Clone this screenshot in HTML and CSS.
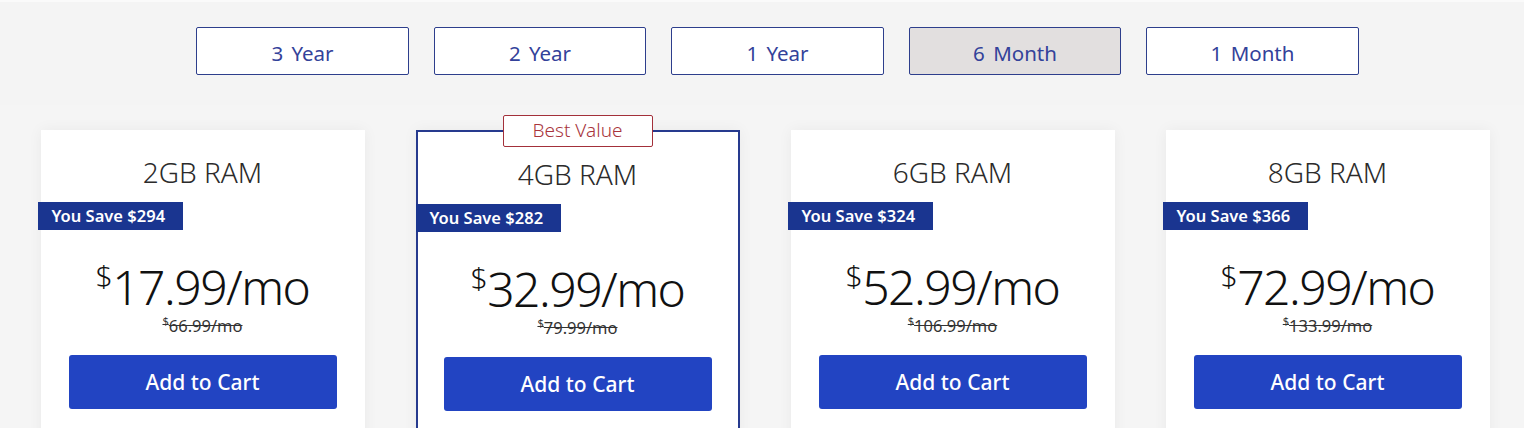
FILE: index.html
```html
<!DOCTYPE html>
<html lang="en">
<head>
<meta charset="utf-8">
<title>Pricing</title>
<link rel="stylesheet" href="styles.css">
</head>
<body>
<section class="terms">
  <div class="tabs">
    <button class="tab">3 Year</button>
    <button class="tab">2 Year</button>
    <button class="tab">1 Year</button>
    <button class="tab active">6 Month</button>
    <button class="tab">1 Month</button>
  </div>
</section>
<section class="plans">
  <div class="card">
    <h2 class="title">2GB RAM</h2>
    <div class="save">You Save $294</div>
    <div class="price"><sup class="cur">$</sup>17.99/mo</div>
    <div class="old"><sup>$</sup>66.99/mo</div>
    <button class="cart">Add to Cart</button>
  </div>
  <div class="card featured">
    <div class="ribbon">Best Value</div>
    <h2 class="title">4GB RAM</h2>
    <div class="save">You Save $282</div>
    <div class="price"><sup class="cur">$</sup>32.99/mo</div>
    <div class="old"><sup>$</sup>79.99/mo</div>
    <button class="cart">Add to Cart</button>
  </div>
  <div class="card">
    <h2 class="title">6GB RAM</h2>
    <div class="save">You Save $324</div>
    <div class="price"><sup class="cur">$</sup>52.99/mo</div>
    <div class="old"><sup>$</sup>106.99/mo</div>
    <button class="cart">Add to Cart</button>
  </div>
  <div class="card">
    <h2 class="title">8GB RAM</h2>
    <div class="save">You Save $366</div>
    <div class="price"><sup class="cur">$</sup>72.99/mo</div>
    <div class="old"><sup>$</sup>133.99/mo</div>
    <button class="cart">Add to Cart</button>
  </div>
</section>
</body>
</html>
```
FILE: styles.css
```css
html, body {
  margin: 0;
  padding: 0;
  background: #f5f5f5;
  font-family: "Noto Sans", "Open Sans", sans-serif;
  overflow: hidden;
}
.terms {
  background: #f4f4f4;
  height: 105px;
  border-top: 2px solid #fafafa;
  box-sizing: border-box;
}
.tabs {
  display: flex;
  justify-content: center;
  gap: 25px;
  padding-top: 25px;
  padding-left: 31px;
}
.tab {
  width: 212.5px;
  height: 48px;
  background: #fff;
  border: 1px solid #2d3e8c;
  border-radius: 2px;
  color: #33429a;
  font-family: "Noto Sans", sans-serif;
  font-size: 20.5px;
  font-weight: 400;
  word-spacing: 3px;
  padding: 3px 0 0;
}
.tab.active {
  background: #e2dfdf;
}
.plans {
  display: flex;
  justify-content: center;
  gap: 51px;
  padding-top: 25px;
  padding-left: 6px;
}
.card {
  position: relative;
  width: 324px;
  height: 320px;
  box-sizing: border-box;
  background: #fff;
  box-shadow: 0 0 14px rgba(0, 0, 0, 0.05);
  display: flex;
  flex-direction: column;
  align-items: center;
  padding: 0 28px;
}
.card.featured {
  border: 2px solid #263a8e;
  border-bottom: none;
  padding: 0 26px;
}
.ribbon {
  position: absolute;
  top: -17px;
  left: 85px;
  width: 150px;
  height: 32px;
  box-sizing: border-box;
  background: #fff;
  border: 1px solid #a3303a;
  border-radius: 2px;
  color: #a8343c;
  font-size: 19px;
  line-height: 29px;
  text-align: center;
  font-weight: 300;
}
.title {
  margin: 26px 0 0;
  font-size: 28px;
  line-height: 32px;
  font-weight: 300;
  color: #2b2b2b;
}
.save {
  align-self: flex-start;
  margin: 14px 0 0 -31px;
  width: 145px;
  height: 28px;
  box-sizing: border-box;
  padding-left: 14px;
  background: #1a3590;
  color: #fff;
  font-size: 16.5px;
  font-weight: 600;
  line-height: 28px;
  white-space: nowrap;
}
.featured .save {
  margin-left: -28px;
}
.price {
  margin-top: 29px;
  font-size: 48px;
  line-height: 56px;
  font-weight: 300;
  color: #111;
  letter-spacing: -1.5px;
}
.price .cur {
  font-size: 30px;
  line-height: 30px;
  vertical-align: top;
  position: relative;
  top: 2px;
  margin-right: 1px;
}
.old {
  margin-top: -4px;
  font-size: 16.5px;
  line-height: 20px;
  color: #333;
  text-decoration: line-through;
}
.old sup {
  font-size: 11px;
}
.cart {
  margin-top: 19px;
  width: 268px;
  height: 54px;
  border: none;
  border-radius: 3px;
  background: #2244c2;
  color: #fff;
  font-family: "Noto Sans", sans-serif;
  font-size: 21px;
  font-weight: 500;
  flex-shrink: 0;
}
```
